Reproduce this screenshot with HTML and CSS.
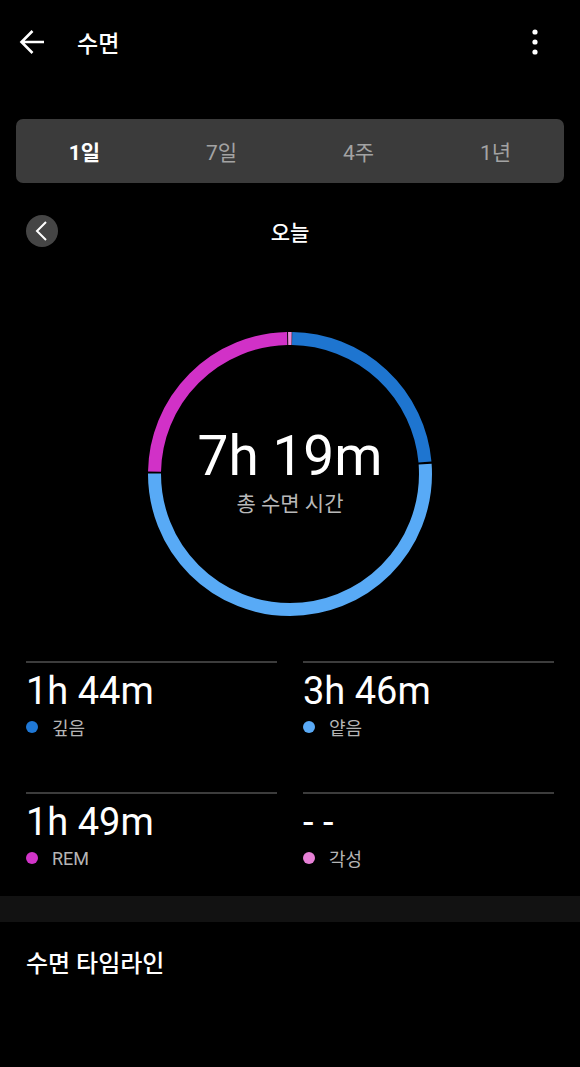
FILE: index.html
```html
<!DOCTYPE html>
<html lang="ko">
<head>
  <meta charset="UTF-8">
  <meta name="viewport" content="width=device-width, initial-scale=1.0">
  <title>수면</title>
  <link rel="stylesheet" href="styles.css">
</head>
<body>
  <header class="topbar">
    <svg class="back" width="26" height="26" viewBox="0 0 26 26">
      <path d="M25 13H2.5M13.5 2L2.5 13l11 11" fill="none" stroke="#fff" stroke-width="2.6"/>
    </svg>
    <h1 class="title">수면</h1>
    <svg class="more" width="6" height="26" viewBox="0 0 6 26">
      <circle cx="3" cy="3" r="2.6" fill="#fff"/>
      <circle cx="3" cy="13" r="2.6" fill="#fff"/>
      <circle cx="3" cy="23" r="2.6" fill="#fff"/>
    </svg>
  </header>

  <nav class="tabs">
    <div class="tab active">1일</div>
    <div class="tab">7일</div>
    <div class="tab">4주</div>
    <div class="tab">1년</div>
  </nav>

  <div class="date-row">
    <div class="prev">
      <svg width="32" height="32" viewBox="0 0 32 32">
        <path d="M20 7l-9 9 9 9" fill="none" stroke="#fff" stroke-width="2"/>
      </svg>
    </div>
    <div class="date">오늘</div>
    <div></div>
  </div>

  <section class="ring">
    <svg class="ring-chart" width="300" height="300" viewBox="0 0 300 300">
      <g transform="rotate(-90 150 150)" fill="none" stroke-width="13">
        <!-- 깊음 -->
        <circle cx="150" cy="150" r="135.5" pathLength="360" stroke="#1e75d0"
          stroke-dasharray="84 276" stroke-dashoffset="-0.9"/>
        <!-- 얕음 -->
        <circle cx="150" cy="150" r="135.5" pathLength="360" stroke="#58aaf6"
          stroke-dasharray="184.4 175.6" stroke-dashoffset="-85.8"/>
        <!-- REM -->
        <circle cx="150" cy="150" r="135.5" pathLength="360" stroke="#d131c7"
          stroke-dasharray="87.8 272.2" stroke-dashoffset="-271"/>
        <!-- 각성 -->
        <circle cx="150" cy="150" r="135.5" pathLength="360" stroke="#ea8ad9"
          stroke-dasharray="1.5 358.5" stroke-dashoffset="0.8"/>
      </g>
    </svg>
    <div class="ring-text">
      <div class="total">7h 19m</div>
      <div class="total-label">총 수면 시간</div>
    </div>
  </section>

  <section class="stats">
    <div class="stat">
      <div class="value">1h 44m</div>
      <div class="label"><span class="dot deep"></span>깊음</div>
    </div>
    <div class="stat">
      <div class="value">3h 46m</div>
      <div class="label"><span class="dot light"></span>얕음</div>
    </div>
    <div class="stat">
      <div class="value">1h 49m</div>
      <div class="label"><span class="dot rem"></span>REM</div>
    </div>
    <div class="stat">
      <div class="value">- -</div>
      <div class="label"><span class="dot awake"></span>각성</div>
    </div>
  </section>

  <div class="band"></div>

  <h2 class="section-title">수면 타임라인</h2>
</body>
</html>
```

FILE: styles.css
```css
body {
  margin: 0;
  background-color: #000;
  color: #fff;
  font-family: Roboto, "Noto Sans CJK KR", sans-serif;
}

.topbar {
  display: flex;
  align-items: center;
  height: 83px;
  padding-left: 19px;
}

.topbar .title {
  margin: 0 0 0 32px;
  font-size: 23px;
  font-weight: 500;
}

.topbar .more {
  margin-left: auto;
  margin-right: 42px;
}

.tabs {
  display: grid;
  grid-template-columns: repeat(4, 1fr);
  align-items: center;
  height: 64px;
  margin: 36px 16px 0;
  border-radius: 7px;
  background-color: #3b3b3b;
}

.tab {
  text-align: center;
  font-size: 21px;
  color: #a3a3a3;
}

.tab.active {
  color: #fff;
  font-weight: 700;
}

.date-row {
  display: grid;
  grid-template-columns: 32px 1fr 32px;
  align-items: center;
  height: 64px;
  margin-top: 16px;
  padding: 0 26px;
}

.prev {
  width: 32px;
  height: 32px;
  border-radius: 50%;
  background-color: #454545;
}

.prev svg {
  display: block;
}

.date {
  text-align: center;
  font-size: 21px;
  font-weight: 500;
}

.ring {
  display: grid;
  place-items: center;
  margin-top: 61px;
}

.ring-chart,
.ring-text {
  grid-area: 1 / 1;
}

.ring-text {
  padding-bottom: 4px;
  text-align: center;
}

.total {
  font-size: 55px;
  line-height: 60px;
}

.total-label {
  margin-top: 4px;
  font-size: 21px;
  line-height: 28px;
  color: #b9b9b9;
}

.stats {
  display: grid;
  grid-template-columns: 1fr 1fr;
  column-gap: 26px;
  row-gap: 53px;
  margin-top: 37px;
  padding: 0 26px;
}

.stat {
  border-top: 2px solid #3c3c3c;
}

.value {
  padding-top: 6px;
  font-size: 38px;
  line-height: 44px;
}

.label {
  display: flex;
  align-items: center;
  gap: 14px;
  height: 24px;
  margin-top: 2px;
  font-size: 18px;
  color: #b5b5b5;
}

.dot {
  width: 12px;
  height: 12px;
  border-radius: 50%;
}

.dot.deep { background-color: #1f78d6; }
.dot.light { background-color: #5aaaf6; }
.dot.rem { background-color: #d134c8; }
.dot.awake { background-color: #e680d6; }

.band {
  height: 26px;
  margin-top: 26px;
  background-color: #121212;
}

.section-title {
  margin: 26px 0 0;
  padding-left: 26px;
  font-size: 24px;
  font-weight: 500;
  line-height: 32px;
}
```
